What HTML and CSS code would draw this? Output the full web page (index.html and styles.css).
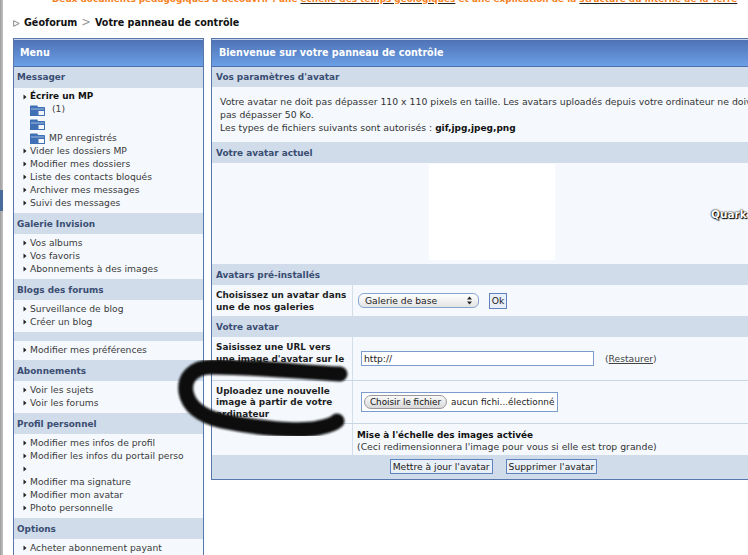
FILE: index.html
```html
<!DOCTYPE html>
<html lang="fr">
<head>
<meta charset="utf-8">
<title>Votre panneau de contrôle</title>
<link rel="stylesheet" href="styles.css">
</head>
<body>
<svg class="defs" width="0" height="0" aria-hidden="true">
  <symbol id="folder" viewBox="0 0 15 11">
    <path d="M0 11V1.2Q0 .4.8.4H7Q7.8.4 7.8 1.2V2H14.2Q15 2 15 2.8V11Z" fill="#3f6fb4"/>
    <path d="M1 3.6H14V4.4H1Z" fill="#bcd0ec"/>
    <path d="M8.5 6H14V10H8.5Z" fill="#f4f7fc"/>
  </symbol>
  <symbol id="bullet" viewBox="0 0 4 6">
    <path d="M.5 .5 3.5 3 .5 5.5Z" fill="#222"/>
  </symbol>
</svg>
<div class="page">
  <div class="scrollmark"></div>
  <div class="notice"><p class="notice-text">Deux documents pédagogiques à découvrir : une <a href="#">échelle des temps géologiques</a> et une explication de la <a href="#">structure du interne de la Terre</a></p></div>
  <nav class="crumbs">
    <svg class="crumb-arrow" width="7" height="7" viewBox="0 0 7 7"><path d="M.7 .7 6.2 3.5 .7 6.3Z" fill="none" stroke="#777" stroke-width=".9"/></svg>
    <b>Géoforum</b><span class="crumb-sep">&gt;</span><b>Votre panneau de contrôle</b>
  </nav>
  <div class="columns">
    <aside class="side panel">
      <h2 class="title">Menu</h2>
      <h3 class="sec sec-tight">Messager</h3>
      <ul class="list">
        <li class="strong"><svg class="bul"><use href="#bullet"/></svg>Écrire un MP</li>
        <li class="folder-row folder-short"><svg class="fold"><use href="#folder"/></svg><span class="count">(1)</span></li>
        <li class="folder-row"><svg class="fold"><use href="#folder"/></svg></li>
        <li class="folder-row"><svg class="fold"><use href="#folder"/></svg>MP enregistrés</li>
        <li><svg class="bul"><use href="#bullet"/></svg>Vider les dossiers MP</li>
        <li><svg class="bul"><use href="#bullet"/></svg>Modifier mes dossiers</li>
        <li><svg class="bul"><use href="#bullet"/></svg>Liste des contacts bloqués</li>
        <li><svg class="bul"><use href="#bullet"/></svg>Archiver mes messages</li>
        <li><svg class="bul"><use href="#bullet"/></svg>Suivi des messages</li>
      </ul>
      <h3 class="sec">Galerie Invision</h3>
      <ul class="list">
        <li><svg class="bul"><use href="#bullet"/></svg>Vos albums</li>
        <li><svg class="bul"><use href="#bullet"/></svg>Vos favoris</li>
        <li><svg class="bul"><use href="#bullet"/></svg>Abonnements à des images</li>
      </ul>
      <h3 class="sec">Blogs des forums</h3>
      <ul class="list">
        <li><svg class="bul"><use href="#bullet"/></svg>Surveillance de blog</li>
        <li><svg class="bul"><use href="#bullet"/></svg>Créer un blog</li>
      </ul>
      <div class="band"></div>
      <ul class="list">
        <li><svg class="bul"><use href="#bullet"/></svg>Modifier mes préférences</li>
      </ul>
      <h3 class="sec">Abonnements</h3>
      <ul class="list">
        <li><svg class="bul"><use href="#bullet"/></svg>Voir les sujets</li>
        <li><svg class="bul"><use href="#bullet"/></svg>Voir les forums</li>
      </ul>
      <h3 class="sec">Profil personnel</h3>
      <ul class="list">
        <li><svg class="bul"><use href="#bullet"/></svg>Modifier mes infos de profil</li>
        <li><svg class="bul"><use href="#bullet"/></svg>Modifier les infos du portail perso</li>
        <li><svg class="bul"><use href="#bullet"/></svg></li>
        <li><svg class="bul"><use href="#bullet"/></svg>Modifier ma signature</li>
        <li><svg class="bul"><use href="#bullet"/></svg>Modifier mon avatar</li>
        <li><svg class="bul"><use href="#bullet"/></svg>Photo personnelle</li>
      </ul>
      <h3 class="sec">Options</h3>
      <ul class="list">
        <li><svg class="bul"><use href="#bullet"/></svg>Acheter abonnement payant</li>
      </ul>
    </aside>
    <main class="main panel">
      <h2 class="title title-main">Bienvenue sur votre panneau de contrôle</h2>
      <h3 class="sec sec-tight">Vos paramètres d'avatar</h3>
      <p class="intro">Votre avatar ne doit pas dépasser 110 x 110 pixels en taille. Les avatars uploadés depuis votre ordinateur ne doivent<br>pas dépasser 50 Ko.<br>Les types de fichiers suivants sont autorisés : <b>gif,jpg,jpeg,png</b></p>
      <h3 class="sec">Votre avatar actuel</h3>
      <div class="current">
        <div class="avatar-box"></div>
        <span class="quark">Quark</span>
      </div>
      <h3 class="sec">Avatars pré-installés</h3>
      <div class="row row-gallery">
        <div class="label">Choisissez un avatar dans une de nos galeries</div>
        <div class="field field-gallery">
          <div class="fake-select">
            <span class="fake-value">Galerie de base</span>
            <svg width="7" height="9" viewBox="0 0 7 9"><path d="M3.5 .5 6 3.5H1ZM3.5 8.5 1 5.5H6Z" fill="#222"/></svg>
          </div>
          <button class="btn btn-ok" type="button">Ok</button>
        </div>
      </div>
      <h3 class="sec">Votre avatar</h3>
      <div class="row row-tall">
        <div class="label">Saisissez une URL vers une image d'avatar sur le Web</div>
        <div class="field field-url">
          <input class="url" type="text" value="http://">
          <span class="restore">(<a href="#">Restaurer</a>)</span>
        </div>
      </div>
      <div class="row row-tall row-line">
        <div class="label">Uploadez une nouvelle image à partir de votre ordinateur</div>
        <div class="field field-url">
          <div class="file">
            <button class="choose" type="button">Choisir le fichier</button>
            <span>aucun fichi...électionné</span>
          </div>
        </div>
      </div>
      <div class="row row-scale row-line">
        <div class="label"></div>
        <div class="scale"><b>Mise à l'échelle des images activée</b><br>(Ceci redimensionnera l'image pour vous si elle est trop grande)</div>
      </div>
      <div class="actions">
        <button class="btn btn-action" type="button">Mettre à jour l'avatar</button>
        <button class="btn btn-action" type="button">Supprimer l'avatar</button>
      </div>
    </main>
  </div>
  <svg class="scribble" width="748" height="555" viewBox="0 0 748 555" aria-hidden="true">
    <defs><filter id="soft" x="-10%" y="-10%" width="120%" height="120%"><feGaussianBlur stdDeviation="1.3"/></filter></defs>
    <path d="M340 374C300 372 258 367 212 367C192 367 184 379 186 392C188 405 200 416 222 421C255 428 300 432 318 428C328 426 334 424 337 421" fill="none" stroke="#0c0c0e" stroke-width="15" stroke-linecap="round" filter="url(#soft)"/>
  </svg>
</div>
</body>
</html>
```

FILE: styles.css
```css
* { box-sizing: border-box; }
html, body { margin: 0; padding: 0; background: #fff; overflow: hidden; }
body { width: 748px; height: 555px; font-family: "DejaVu Sans", Verdana, sans-serif; font-size: 9.2px; color: #333; }
.defs { display: block; }
h2, h3, p, ul { margin: 0; padding: 0; }
ul { list-style: none; }
a { color: inherit; }

.page { position: relative; width: 748px; height: 555px; overflow: hidden; padding-left: 13px; }
.page::before { content: ""; position: absolute; left: 0; top: 0; bottom: 0; width: 3px; background: linear-gradient(90deg, #9c9c9c, #c4c4c4); }
.scrollmark { position: absolute; left: 0; top: 190px; width: 3px; height: 21px; background: #4a6a9c; }

.notice { height: 5px; margin-left: -13px; width: 748px; overflow: hidden; display: flex; align-items: flex-end; }
.notice-text { flex: none; width: 748px; padding-left: 52px; font-size: 8.9px; line-height: 13px; font-weight: bold; color: #f5821f; white-space: nowrap; margin-bottom: -1px; }
.notice-text a { text-decoration-color: #222; }

.crumbs { height: 33px; display: flex; align-items: center; padding-top: 1px; font-size: 9.6px; color: #111; white-space: nowrap; }
.crumb-arrow { margin-right: 4px; margin-top: 2px; }
.crumb-sep { color: #999; margin: 0 4px; font-size: 11.5px; }

.columns { display: flex; gap: 7px; align-items: flex-start; width: 800px; }
.panel { background: #f5f9fe; border: 1px solid #5777ad; }
.side { flex: none; width: 191px; height: 560px; border-bottom: 0; }
.main { flex: none; width: 565px; }

.title { height: 28px; border-top: 1px solid #c3d3ea; border-bottom: 1px solid #4c6fae; background: linear-gradient(#4f72b5, #6b9fe6); color: #fff; font-size: 9.6px; font-weight: bold; line-height: 25px; padding-left: 6px; }
.title-main { padding-left: 7px; }

.sec { height: 21px; line-height: 22px; padding-left: 3px; background: #d0dcea; color: #3a4d72; font-size: 8.9px; font-weight: bold; }
.main .sec { padding-left: 4px; }
.sec-tight { height: 20px; line-height: 20px; }
.side .sec-tight { height: 21px; line-height: 20px; }

.list { padding: 2px 0 4px 7px; }
.list li { height: 13px; line-height: 13px; display: flex; align-items: center; white-space: nowrap; color: #3b3b3b; }
.list .strong { font-weight: bold; color: #111; font-size: 8.9px; }
.bul { flex: none; width: 4px; height: 6px; margin: 1px 3px 0 2px; }
.band { height: 9px; background: #d0dcea; }

.list .folder-row { height: 14px; padding-left: 9px; }
.list .folder-short { height: 13px; }
.fold { flex: none; width: 15px; height: 11px; margin: 2px 4px 0 0; }
.count { margin-left: 3px; margin-top: -2px; }

.intro { height: 55px; padding: 8px 0 0 8px; font-size: 9.3px; line-height: 13px; white-space: nowrap; color: #333; }
.intro b { color: #111; font-size: 9px; }

.current { height: 101px; display: flex; align-items: center; gap: 156px; padding-left: 217px; }
.avatar-box { flex: none; width: 126px; height: 96px; background: #fff; align-self: flex-start; margin-top: 1px; }
.quark { color: #fff; font-weight: bold; font-size: 10.5px; margin-top: 1px; text-shadow: 0 0 1px #000, 0 0 2px #000, 1px 1px 1px #000; }

.row { display: grid; grid-template-columns: 141px 1fr; }
.row-gallery { height: 31px; }
.row-tall { height: 43px; }
.row-scale { height: 32px; }
.row-line { border-top: 1px solid #c6d6e2; }
.label { border-right: 1px solid #d3dee8; padding: 2px 2px 0 4px; font-size: 8.9px; font-weight: bold; line-height: 11.5px; color: #1e1e1e; display: flex; align-items: center; }

.field { display: flex; align-items: center; }
.field-gallery { padding-left: 5px; gap: 10px; }
.field-url { padding-left: 8px; }

.fake-select { width: 121px; height: 15px; border: 1px solid #86a5cf; border-radius: 6px; background: linear-gradient(#fff, #e4e4e4); display: flex; align-items: center; justify-content: space-between; padding: 0 5px 0 6px; color: #222; }
.btn { height: 16px; padding: 0 2px; border: 1px solid #5e83c0; border-radius: 0; background: #e9eff7; color: #1a1a1a; font: 9.2px "DejaVu Sans", Verdana, sans-serif; white-space: nowrap; }
.btn-ok { width: 18px; padding: 0; }
.btn-action { height: 15px; }

.url { width: 233px; height: 15px; border: 1px solid #7c9ccb; border-radius: 0; background: #fff; padding: 0 2px; font: 9.2px "DejaVu Sans", Verdana, sans-serif; color: #222; outline: 0; }
.restore { margin-left: 11px; color: #444; }

.file { width: 197px; height: 20px; border: 1px solid #7c9ccb; background: #fff; display: flex; align-items: center; gap: 4px; padding-left: 2px; font-size: 8.9px; white-space: nowrap; color: #222; }
.choose { flex: none; width: 83px; height: 14px; padding: 0; border: 1px solid #999; border-radius: 7px; background: linear-gradient(#fafafa, #d8d8d8); font: 8.8px "DejaVu Sans", Verdana, sans-serif; color: #111; white-space: nowrap; }

.scale { padding: 5px 0 0 4px; font-size: 9.3px; line-height: 11px; color: #333; white-space: nowrap; }
.scale b { color: #111; font-size: 8.9px; }

.actions { height: 24px; background: #d0dcea; display: flex; justify-content: center; align-items: center; gap: 13px; padding-bottom: 1px; }

.scribble { position: absolute; left: 0; top: 0; pointer-events: none; }
```
